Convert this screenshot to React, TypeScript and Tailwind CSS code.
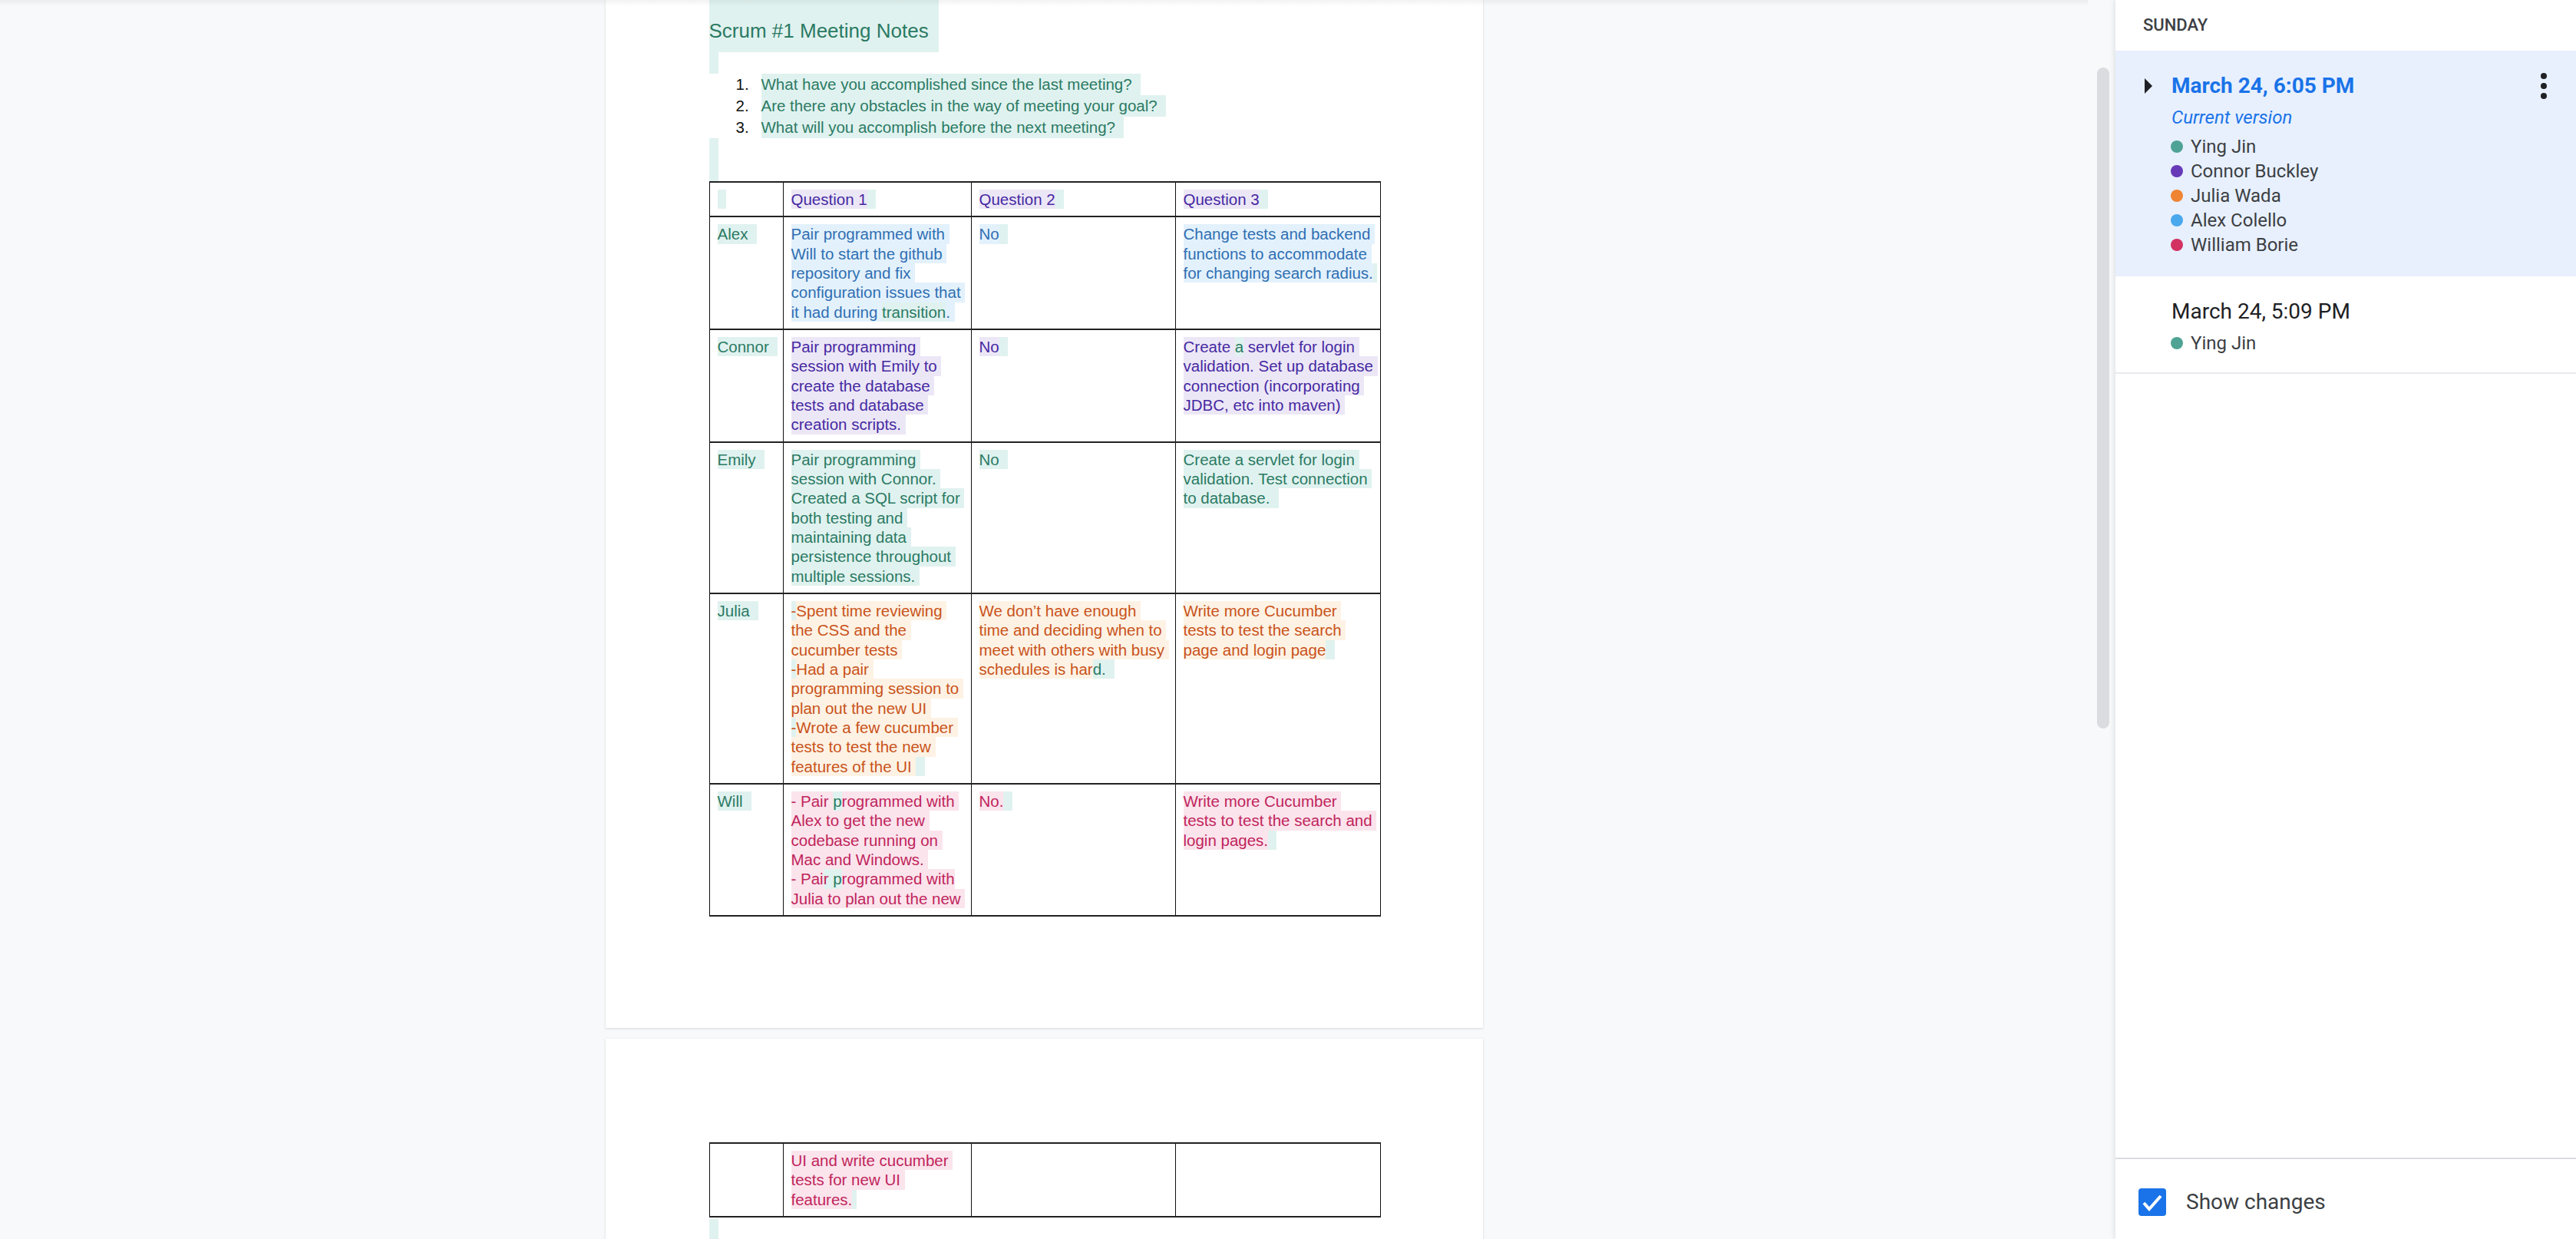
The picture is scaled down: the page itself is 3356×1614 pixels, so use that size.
import { Fragment } from 'react';

// text colour / highlight colour per author
type Key = 'g' | 'b' | 'p' | 'o' | 'r';
type Seg = [string, Key, Key?]; // text, text colour, highlight (defaults to text colour)

const TXT: Record<Key, string> = {
  g: 'text-[#2b7a64]',
  b: 'text-[#2f6fb3]',
  p: 'text-[#4629a2]',
  o: 'text-[#c9521a]',
  r: 'text-[#c0245c]',
};

const BG: Record<Key, string> = {
  g: 'bg-[#e0f2ef]',
  b: 'bg-[#e3f1fc]',
  p: 'bg-[#ece7f6]',
  o: 'bg-[#fdf2e4]',
  r: 'bg-[#fbe4ec]',
};

type Cell = Seg[][];

// one document line, every run keeps its own highlight box
function DocLine({ segs }: { segs: Seg[] }) {
  return (
    <div className="h-[25.33px] leading-[25.33px] whitespace-pre">
      {segs.map(([text, t, b], i) => (
        <span key={i} className={`inline-block leading-[25.33px] ${TXT[t]} ${BG[b ?? t]}`}>
          {text}
        </span>
      ))}
    </div>
  );
}

const header: Cell[] = [
  [[['  ', 'g']]],
  [[['Question 1', 'p'], ['  ', 'g']]],
  [[['Question 2', 'p'], ['  ', 'g']]],
  [[['Question 3', 'p'], ['  ', 'g']]],
];

const rows: Cell[][] = [
  [
    [[['Alex  ', 'g']]],
    [
      [['Pair programmed with ', 'b']],
      [['Will to start the github ', 'b']],
      [['repository and fix ', 'b']],
      [['configuration issues that ', 'b']],
      [['it had during ', 'b'], ['transition', 'g'], ['. ', 'b']],
    ],
    [[['No', 'b'], ['  ', 'g']]],
    [
      [['Change tests and backend ', 'b']],
      [['functions to accommodate ', 'b']],
      [['for changing search radius.', 'b'], [' ', 'g']],
    ],
  ],
  [
    [[['Connor  ', 'g']]],
    [
      [['Pair programming ', 'p']],
      [['session with Emily to ', 'p']],
      [['create the database ', 'p']],
      [['tests and database ', 'p']],
      [['creation scripts. ', 'p']],
    ],
    [[['No', 'p'], ['  ', 'g']]],
    [
      [['Create ', 'p'], ['a', 'g'], [' servlet for login ', 'p']],
      [['validation. Set up database ', 'p']],
      [['connection (incorporating ', 'p']],
      [['JDBC, etc into maven) ', 'p']],
    ],
  ],
  [
    [[['Emily  ', 'g']]],
    [
      [['Pair programming ', 'g']],
      [['session with Connor. ', 'g']],
      [['Created a SQL script for ', 'g']],
      [['both testing and ', 'g']],
      [['maintaining data ', 'g']],
      [['persistence throughout ', 'g']],
      [['multiple sessions. ', 'g']],
    ],
    [[['No  ', 'g']]],
    [
      [['Create a servlet for login ', 'g']],
      [['validation. Test connection ', 'g']],
      [['to database.  ', 'g']],
    ],
  ],
  [
    [[['Julia  ', 'g']]],
    [
      [['-', 'o', 'g'], ['Spent time reviewing ', 'o']],
      [['the CSS and the ', 'o']],
      [['cucumber tests ', 'o']],
      [['-', 'o', 'g'], ['Had a pair ', 'o']],
      [['programming session to ', 'o']],
      [['plan out the new UI ', 'o']],
      [['-', 'o', 'g'], ['Wrote a few cucumber ', 'o']],
      [['tests to test the new ', 'o']],
      [['features of the UI ', 'o'], ['  ', 'g']],
    ],
    [
      [['We don’t have enough ', 'o']],
      [['time and deciding when to ', 'o']],
      [['meet with others with busy ', 'o']],
      [['schedules is har', 'o'], ['d.  ', 'g']],
    ],
    [
      [['Write more Cucumber ', 'o']],
      [['tests to test the search ', 'o']],
      [['page and login page', 'o'], ['  ', 'g']],
    ],
  ],
  [
    [[['Will  ', 'g']]],
    [
      [['- Pair ', 'r'], ['p', 'g'], ['rogrammed with ', 'r']],
      [['Alex to get the new ', 'r']],
      [['codebase running on ', 'r']],
      [['Mac and Windows. ', 'r']],
      [['- Pai', 'r'], ['r ', 'r', 'g'], ['p', 'g'], ['rogrammed with', 'r']],
      [['Julia to plan out the new ', 'r']],
    ],
    [[['No.', 'r'], ['  ', 'g']]],
    [
      [['Write more Cucumber ', 'r']],
      [['tests to test the search and ', 'r']],
      [['login pages.', 'r'], ['  ', 'g']],
    ],
  ],
];

const overflowRow: Cell[] = [
  [],
  [
    [['UI and write cucumber ', 'r']],
    [['tests for new UI ', 'r']],
    [['features.', 'r'], [' ', 'g']],
  ],
  [],
  [],
];

function DocTable({ head, body }: { head?: Cell[]; body: Cell[][] }) {
  const all = head ? [head, ...body] : body;
  return (
    <table className="w-[874px] table-fixed border-collapse">
      <colgroup>
        <col className="w-[96px]" />
        <col className="w-[245px]" />
        <col className="w-[266px]" />
        <col className="w-[267px]" />
      </colgroup>
      <tbody>
        {all.map((row, r) => (
          <tr key={r}>
            {row.map((cell, c) => (
              <td
                key={c}
                className="border-x border-y-2 border-x-[#111] border-y-[#222] px-[10px] pt-[9px] pb-[9px] align-top"
              >
                {cell.map((segs, l) => (
                  <DocLine key={l} segs={segs} />
                ))}
              </td>
            ))}
          </tr>
        ))}
      </tbody>
    </table>
  );
}

const questions = [
  'What have you accomplished since the last meeting?',
  'Are there any obstacles in the way of meeting your goal?',
  'What will you accomplish before the next meeting?',
];

const authors = [
  { name: 'Ying Jin', dot: 'bg-[#4ea394]' },
  { name: 'Connor Buckley', dot: 'bg-[#673ab7]' },
  { name: 'Julia Wada', dot: 'bg-[#ef8433]' },
  { name: 'Alex Colello', dot: 'bg-[#4aa8ec]' },
  { name: 'William Borie', dot: 'bg-[#d33162]' },
];

function Author({ name, dot }: { name: string; dot: string }) {
  return (
    <div className="flex h-[32px] items-center">
      <span className={`mr-[10px] h-4 w-4 rounded-full ${dot}`} />
      <span className="text-[24px] leading-[32px] text-[#3c4043]">{name}</span>
    </div>
  );
}

export default function App() {
  return (
    <div className="flex h-screen w-full overflow-hidden bg-[#f8f9fa]">
      {/* Document */}
      <div className="relative min-w-0 flex-1 overflow-hidden">
        <div className="flex flex-col items-center font-['Liberation_Sans',Arial,sans-serif] text-[20.5px]">
          {/* Page 1 */}
          <div className="h-[1339px] w-[1143px] shrink-0 bg-white pl-[135px] shadow-[0_1px_3px_rgba(60,64,67,0.18)]">
            <div className="h-[68px]">
              <span className="inline-block h-[68px] bg-[#e0f2ef] pt-[26px] pr-[13px] text-[26px] leading-[29px] text-[#2b7a64]">
                Scrum #1 Meeting Notes
              </span>
            </div>
            <div className="h-[28px] w-[12px] bg-[#e0f2ef]" />
            {questions.map((q, i) => (
              <div key={q} className="flex h-[28px] leading-[28px] whitespace-pre">
                <span className="w-[68px] shrink-0 pl-[35px] text-[#111]">{i + 1}.</span>
                <span className="inline-block bg-[#e0f2ef] text-[#2b7a64]">{q + '  '}</span>
              </div>
            ))}
            <div className="h-[56px] w-[12px] bg-[#e0f2ef]" />
            <DocTable head={header} body={rows} />
          </div>

          {/* Page 2 */}
          <div className="mt-[14px] h-[400px] w-[1143px] shrink-0 bg-white pt-[135px] pl-[135px] shadow-[0_1px_3px_rgba(60,64,67,0.18)]">
            <DocTable body={[overflowRow]} />
            <div className="mt-[2px] h-[26px] w-[12px] bg-[#e0f2ef]" />
          </div>
        </div>
        <div className="pointer-events-none absolute inset-x-0 top-0 h-[8px] bg-linear-to-b from-black/5 to-transparent" />
      </div>

      {/* Scrollbar */}
      <div className="w-[36px] shrink-0 pt-[88px] pl-[12px]">
        <div className="h-[861px] w-4 rounded-full bg-[#dadce0]" />
      </div>

      {/* Version history */}
      <aside className="flex w-[600px] shrink-0 flex-col bg-white font-[Roboto,sans-serif] shadow-[-2px_0_6px_rgba(60,64,67,0.12)]">
        <div className="h-[66px] pt-[20px] pl-[36px] text-[22px] leading-[26px] font-medium text-[#3c4043]">
          SUNDAY
        </div>

        <div className="bg-[#e8f0fe] pt-[26px] pb-[25px]">
          <div className="flex h-[40px] items-center">
            <div className="w-[73px] pl-[38px]">
              <svg width="10" height="20" viewBox="0 0 10 20" className="block">
                <polygon points="0,0 10,10 0,20" fill="#202124" />
              </svg>
            </div>
            <span className="flex-1 text-[28px] leading-[40px] font-bold text-[#1a73e8]">
              March 24, 6:05 PM
            </span>
            <svg width="8" height="34" viewBox="0 0 8 34" className="mr-[38px] block">
              <circle cx="4" cy="4" r="4" fill="#202124" />
              <circle cx="4" cy="17" r="4" fill="#202124" />
              <circle cx="4" cy="30" r="4" fill="#202124" />
            </svg>
          </div>
          <div className="mt-[5px] pl-[73px] text-[24px] leading-[32px] text-[#1a73e8] italic">
            Current version
          </div>
          <div className="mt-[6px] pl-[72px]">
            {authors.map((a) => (
              <Author key={a.name} {...a} />
            ))}
          </div>
        </div>

        <div className="border-b-2 border-[#e8eaed] pt-[26px] pb-[22px]">
          <div className="pl-[73px] text-[28px] leading-[40px] text-[#202124]">March 24, 5:09 PM</div>
          <div className="mt-[5px] pl-[72px]">
            <Author {...authors[0]} />
          </div>
        </div>

        <div className="flex-1" />

        <div className="h-[106px] border-t-2 border-[#dadce0] pt-[38px] pl-[30px]">
          <label className="flex items-center">
            <span className="flex h-[36px] w-[36px] items-center justify-center rounded-[4px] bg-[#1a73e8]">
              <svg width="36" height="36" viewBox="0 0 36 36">
                <path d="M7 19 L14 27 L29 10" fill="none" stroke="#fff" strokeWidth="4" />
              </svg>
            </span>
            <span className="ml-[26px] text-[28px] leading-[36px] text-[#3c4043]">Show changes</span>
          </label>
        </div>
      </aside>
    </div>
  );
}
